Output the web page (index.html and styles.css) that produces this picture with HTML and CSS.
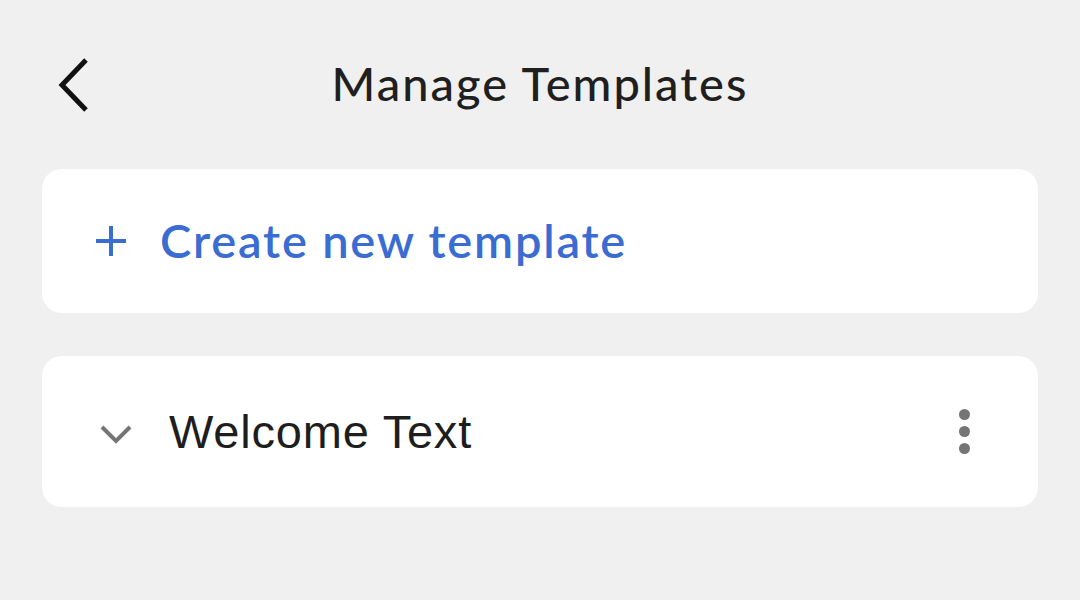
FILE: index.html
```html
<!DOCTYPE html>
<html lang="en">
<head>
	<meta charset="UTF-8">
	<title>Manage Templates</title>
	<link rel="stylesheet" href="styles.css">
</head>
<body>
	<div class="page">
		<div class="topbar">
			<div class="back">
				<svg width="36" height="56" viewBox="0 0 36 56"><path d="M30 3 L6 28 L30 53" fill="none" stroke="#111" stroke-width="5"/></svg>
			</div>
			<div class="title">Manage Templates</div>
		</div>
		<div class="card create">
			<svg class="plus" width="34" height="34" viewBox="0 0 34 34"><path d="M17 2 V32 M2 17 H32" stroke="#3a6cd1" stroke-width="4"/></svg>
			<span class="create-text">Create new template</span>
		</div>
		<div class="card item">
			<svg class="chev" width="34" height="20" viewBox="0 0 34 20"><path d="M3 3 L17 17 L31 3" fill="none" stroke="#757575" stroke-width="4"/></svg>
			<span class="item-text">Welcome Text</span>
			<div class="dots"><i></i><i></i><i></i></div>
		</div>
	</div>
</body>
</html>
```

FILE: styles.css
```css
*{margin: 0;padding: 0;box-sizing: border-box;}
body{background: #f0f0f0;font-family: Lato, "Noto Sans", sans-serif;}
.page{padding: 0 42px;}
.topbar{height: 169px;display: flex;align-items: center;justify-content: center;position: relative;}
.back{position: absolute;left: 14px;top: 57px;}
.title{font-size: 47px;letter-spacing: 2px;color: #1f1f1f;font-weight: 500;margin-top: -4px;}
.card{background: #fff;border-radius: 20px;display: flex;align-items: center;}
.create{height: 144px;padding-left: 52px;}
.plus{margin-right: 32px;}
.create-text{font-size: 47px;letter-spacing: 1.8px;color: #3a6cd1;font-weight: 600;margin-top: -3px;}
.item{height: 151px;margin-top: 43px;padding-left: 57px;padding-right: 68px;}
.chev{margin-right: 36px;margin-top: 4px;}
.item-text{font-size: 47px;letter-spacing: 0.8px;color: #1e1e1e;flex: 1;font-family: "Liberation Sans", sans-serif;}
.dots{display: flex;flex-direction: column;gap: 6px;}
.dots i{width: 11px;height: 11px;border-radius: 50%;background: #757575;display: block;}
```
